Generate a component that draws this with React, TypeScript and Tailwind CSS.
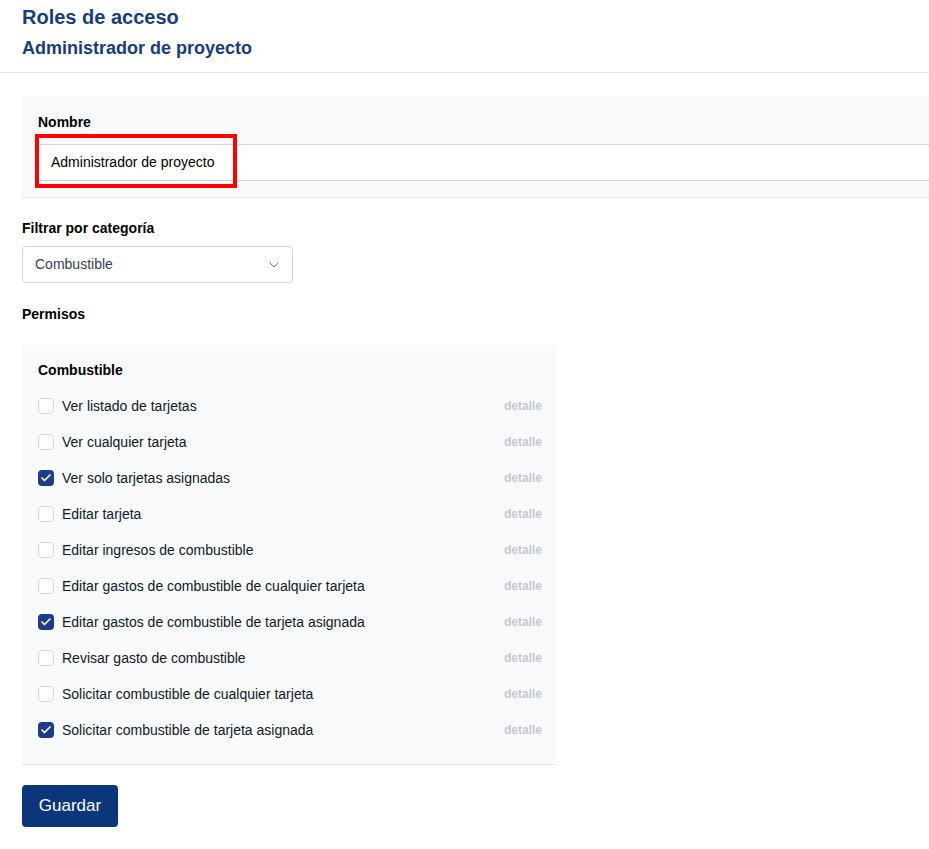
import { ChevronDown, Check } from 'lucide-react';

const permisos = [
  { label: 'Ver listado de tarjetas', checked: false },
  { label: 'Ver cualquier tarjeta', checked: false },
  { label: 'Ver solo tarjetas asignadas', checked: true },
  { label: 'Editar tarjeta', checked: false },
  { label: 'Editar ingresos de combustible', checked: false },
  { label: 'Editar gastos de combustible de cualquier tarjeta', checked: false },
  { label: 'Editar gastos de combustible de tarjeta asignada', checked: true },
  { label: 'Revisar gasto de combustible', checked: false },
  { label: 'Solicitar combustible de cualquier tarjeta', checked: false },
  { label: 'Solicitar combustible de tarjeta asignada', checked: true },
];

function Checkbox({ checked }: { checked: boolean }) {
  return checked ? (
    <span className="flex h-4 w-4 items-center justify-center rounded-[4px] bg-[#1e3a8a]">
      <Check className="h-3 w-3 text-white" strokeWidth={3.5} />
    </span>
  ) : (
    <span className="h-4 w-4 rounded-[4px] border border-gray-300 bg-white" />
  );
}

export default function App() {
  return (
    <div className="min-h-screen overflow-hidden bg-white font-['Liberation_Sans',Arial,sans-serif] text-black">
      <header className="border-b border-gray-200 px-[22px] pt-[4px] pb-[12px]">
        <h1 className="text-[20px] leading-[26px] font-bold text-[#163d7c]">Roles de acceso</h1>
        <h2 className="mt-[6px] text-[18px] leading-[24px] font-bold text-[#163d7c]">
          Administrador de proyecto
        </h2>
      </header>

      <main className="px-[22px]">
        <section className="relative -mr-[22px] mt-[23px] border-b border-gray-200 bg-[#f8fafc] pt-4 pb-[16px] pl-4">
          <label className="block text-[14px] leading-5 font-bold">Nombre</label>
          <div className="mt-3 flex h-[37px] items-center border-y border-gray-300 bg-white px-[13px] text-[14px]">
            Administrador de proyecto
          </div>
          <div className="absolute top-[38px] left-[13px] h-[54px] w-[202px] border-[4px] border-[#ff0000]" />
        </section>

        <label className="mt-[20px] block text-[14px] leading-5 font-bold">Filtrar por categoría</label>
        <div className="mt-2 flex h-[37px] w-[271px] items-center justify-between rounded-[4px] border border-gray-300 bg-white pr-[10px] pl-[12px] text-[14px] text-gray-700">
          <span>Combustible</span>
          <ChevronDown className="h-4 w-4 text-gray-500" strokeWidth={1.5} />
        </div>

        <p className="mt-[21px] text-[14px] leading-5 font-bold">Permisos</p>

        <section className="mt-[21px] w-[535px] border-b border-gray-200 bg-[#f8fafc] pt-[15px] pr-[15px] pb-4 pl-4">
          <h3 className="text-[14px] leading-5 font-bold">Combustible</h3>
          <ul className="mt-2">
            {permisos.map((p) => (
              <li key={p.label} className="flex h-9 items-center gap-2">
                <Checkbox checked={p.checked} />
                <span className="flex-1 text-[14px] text-gray-900">{p.label}</span>
                <span className="text-[12px] font-bold text-[#c5c9d0]">detalle</span>
              </li>
            ))}
          </ul>
        </section>

        <button className="mt-[20px] h-[42px] w-[96px] rounded-[4px] bg-[#0c367a] text-[17px] text-white">
          Guardar
        </button>
      </main>
    </div>
  );
}
